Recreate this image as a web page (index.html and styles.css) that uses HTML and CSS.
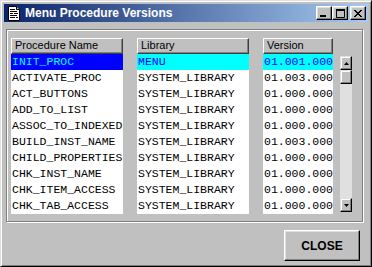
FILE: index.html
```html
<!DOCTYPE html>
<html lang="en">
<head>
    <meta charset="UTF-8">
    <title>Menu Procedure Versions</title>
    <link rel="stylesheet" href="styles.css">
</head>
<body>

<div class="window">
    <div class="titlebar">
        <svg class="app-icon" width="12" height="15" viewBox="0 0 12 15">
            <path d="M0.5 0.5 H8.5 L11.5 3.5 V14.5 H0.5 Z" fill="#fff" stroke="#000"/>
            <path d="M8.5 0.5 V3.5 H11.5" fill="#c0c0c0" stroke="#000"/>
            <path d="M2 3.5 H7 M2 5.5 H9 M2 7.5 H5 M6 7.5 H10 M2 9.5 H9 M2 11.5 H7 M8 11.5 H10" stroke="#000"/>
        </svg>
        <span class="title">Menu Procedure Versions</span>
        <div class="controls">
            <button class="ctl">
                <svg width="8" height="7" viewBox="0 0 8 7"><rect x="0" y="5" width="6" height="2" fill="#000"/></svg>
            </button>
            <button class="ctl">
                <svg width="9" height="9" viewBox="0 0 9 9"><path d="M0.5 1.5 H8.5 V8.5 H0.5 Z M0 0.5 H9" fill="none" stroke="#000"/><rect x="0" y="0" width="9" height="2" fill="#000"/></svg>
            </button>
            <button class="ctl ctl-close">
                <svg width="8" height="7" viewBox="0 0 8 7"><path d="M0 0 L7 7 M1 0 L8 7 M7 0 L0 7 M8 0 L1 7" stroke="#000" stroke-width="1"/></svg>
            </button>
        </div>
    </div>

    <div class="group">
        <div class="col col-name">
            <div class="head">Procedure Name</div>
            <ul class="list">
                <li class="sel">INIT_PROC</li>
                <li>ACTIVATE_PROC</li>
                <li>ACT_BUTTONS</li>
                <li>ADD_TO_LIST</li>
                <li>ASSOC_TO_INDEXED</li>
                <li>BUILD_INST_NAME</li>
                <li>CHILD_PROPERTIES</li>
                <li>CHK_INST_NAME</li>
                <li>CHK_ITEM_ACCESS</li>
                <li>CHK_TAB_ACCESS</li>
            </ul>
        </div>
        <div class="col col-lib">
            <div class="head">Library</div>
            <ul class="list">
                <li class="sel">MENU</li>
                <li>SYSTEM_LIBRARY</li>
                <li>SYSTEM_LIBRARY</li>
                <li>SYSTEM_LIBRARY</li>
                <li>SYSTEM_LIBRARY</li>
                <li>SYSTEM_LIBRARY</li>
                <li>SYSTEM_LIBRARY</li>
                <li>SYSTEM_LIBRARY</li>
                <li>SYSTEM_LIBRARY</li>
                <li>SYSTEM_LIBRARY</li>
            </ul>
        </div>
        <div class="col col-ver">
            <div class="head">Version</div>
            <ul class="list">
                <li class="sel">01.001.000</li>
                <li>01.003.000</li>
                <li>01.000.000</li>
                <li>01.000.000</li>
                <li>01.000.000</li>
                <li>01.003.000</li>
                <li>01.000.000</li>
                <li>01.000.000</li>
                <li>01.000.000</li>
                <li>01.000.000</li>
            </ul>
        </div>
        <div class="scrollbar">
            <div class="sb-btn">
                <svg width="5" height="3" viewBox="0 0 5 3"><path d="M2.5 0 L5 3 H0 Z" fill="#000"/></svg>
            </div>
            <div class="sb-thumb"></div>
            <div class="sb-track"></div>
            <div class="sb-btn">
                <svg width="5" height="3" viewBox="0 0 5 3"><path d="M0 0 H5 L2.5 3 Z" fill="#000"/></svg>
            </div>
        </div>
    </div>

    <div class="footer">
        <button class="close-btn">CLOSE</button>
    </div>
</div>

</body>
</html>
```

FILE: styles.css
```css
* {
    box-sizing: border-box;
}
body {
    margin: 0;
    font-family: 'Liberation Sans', Arial, sans-serif;
    background: #c0c0c0;
}
.window {
    width: 372px;
    height: 267px;
    background: #c0c0c0;
    border: 1px solid;
    border-color: #dfdfdf #000 #000 #dfdfdf;
    box-shadow: inset 1px 1px #fff, inset -1px -1px #808080;
    padding: 3px;
    display: flex;
    flex-direction: column;
}
.titlebar {
    height: 18px;
    display: flex;
    align-items: center;
    padding-left: 4px;
    padding-right: 2px;
    background: linear-gradient(to right, #0a246a, #a6caf0);
}
.app-icon {
    display: block;
}
.title {
    margin-left: 5px;
    color: #fff;
    font-weight: bold;
    font-size: 12px;
}
.controls {
    margin-left: auto;
    display: flex;
}
.ctl {
    width: 16px;
    height: 14px;
    padding: 0;
    background: #c0c0c0;
    border: 1px solid;
    border-color: #fff #000 #000 #fff;
    box-shadow: inset -1px -1px #808080, inset 1px 1px #dfdfdf;
    display: flex;
    align-items: center;
    justify-content: center;
}
.ctl svg {
    display: block;
}
.ctl-close {
    margin-left: 2px;
}
.group {
    margin: 7px 5px 0 2px;
    height: 193px;
    border: 1px solid #808080;
    box-shadow: inset 1px 1px #fff, 1px 1px #fff;
    padding: 8px 0 0 4px;
    display: flex;
    align-items: flex-start;
}
.col-name, .col-lib {
    width: 112px;
    margin-right: 14px;
}
.col-ver {
    width: 70px;
    margin-right: 7px;
}
.head {
    height: 16px;
    background: #c0c0c0;
    border: 1px solid;
    border-color: #fff #404040 #404040 #fff;
    box-shadow: inset -1px -1px #808080;
    font-size: 11px;
    line-height: 13px;
    padding-left: 3px;
    color: #000;
}
.list {
    list-style: none;
    margin: 0;
    padding: 0;
    background: #fff;
    height: 160px;
}
.list li {
    height: 16px;
    line-height: 16px;
    font-family: 'Liberation Mono', 'Courier New', monospace;
    font-size: 11.5px;
    padding-left: 1px;
    color: #000;
    white-space: nowrap;
    overflow: hidden;
}
.col-name .sel {
    background: #0000ff;
    color: #00ffff;
}
.col-lib .sel, .col-ver .sel {
    background: #00ffff;
    color: #0000ff;
}
.scrollbar {
    width: 12px;
    height: 156px;
    margin-top: 18px;
    display: flex;
    flex-direction: column;
}
.sb-btn, .sb-thumb {
    height: 14px;
    background: #c0c0c0;
    border: 1px solid;
    border-color: #dfdfdf #000 #000 #dfdfdf;
    box-shadow: inset -1px -1px #808080, inset 1px 1px #fff;
    display: flex;
    align-items: center;
    justify-content: center;
}
.sb-btn svg {
    display: block;
}
.sb-track {
    flex: 1;
    background: #e0e0e0;
}
.footer {
    display: flex;
    justify-content: flex-end;
    padding: 8px 8px 0 0;
}
.close-btn {
    width: 76px;
    height: 31px;
    background: #c0c0c0;
    border: 1px solid;
    border-color: #fff #000 #000 #fff;
    box-shadow: inset -1px -1px #808080, inset 1px 1px #dfdfdf;
    font-family: 'Liberation Sans', Arial, sans-serif;
    font-weight: bold;
    font-size: 12px;
    color: #000;
    padding: 0;
}
```
